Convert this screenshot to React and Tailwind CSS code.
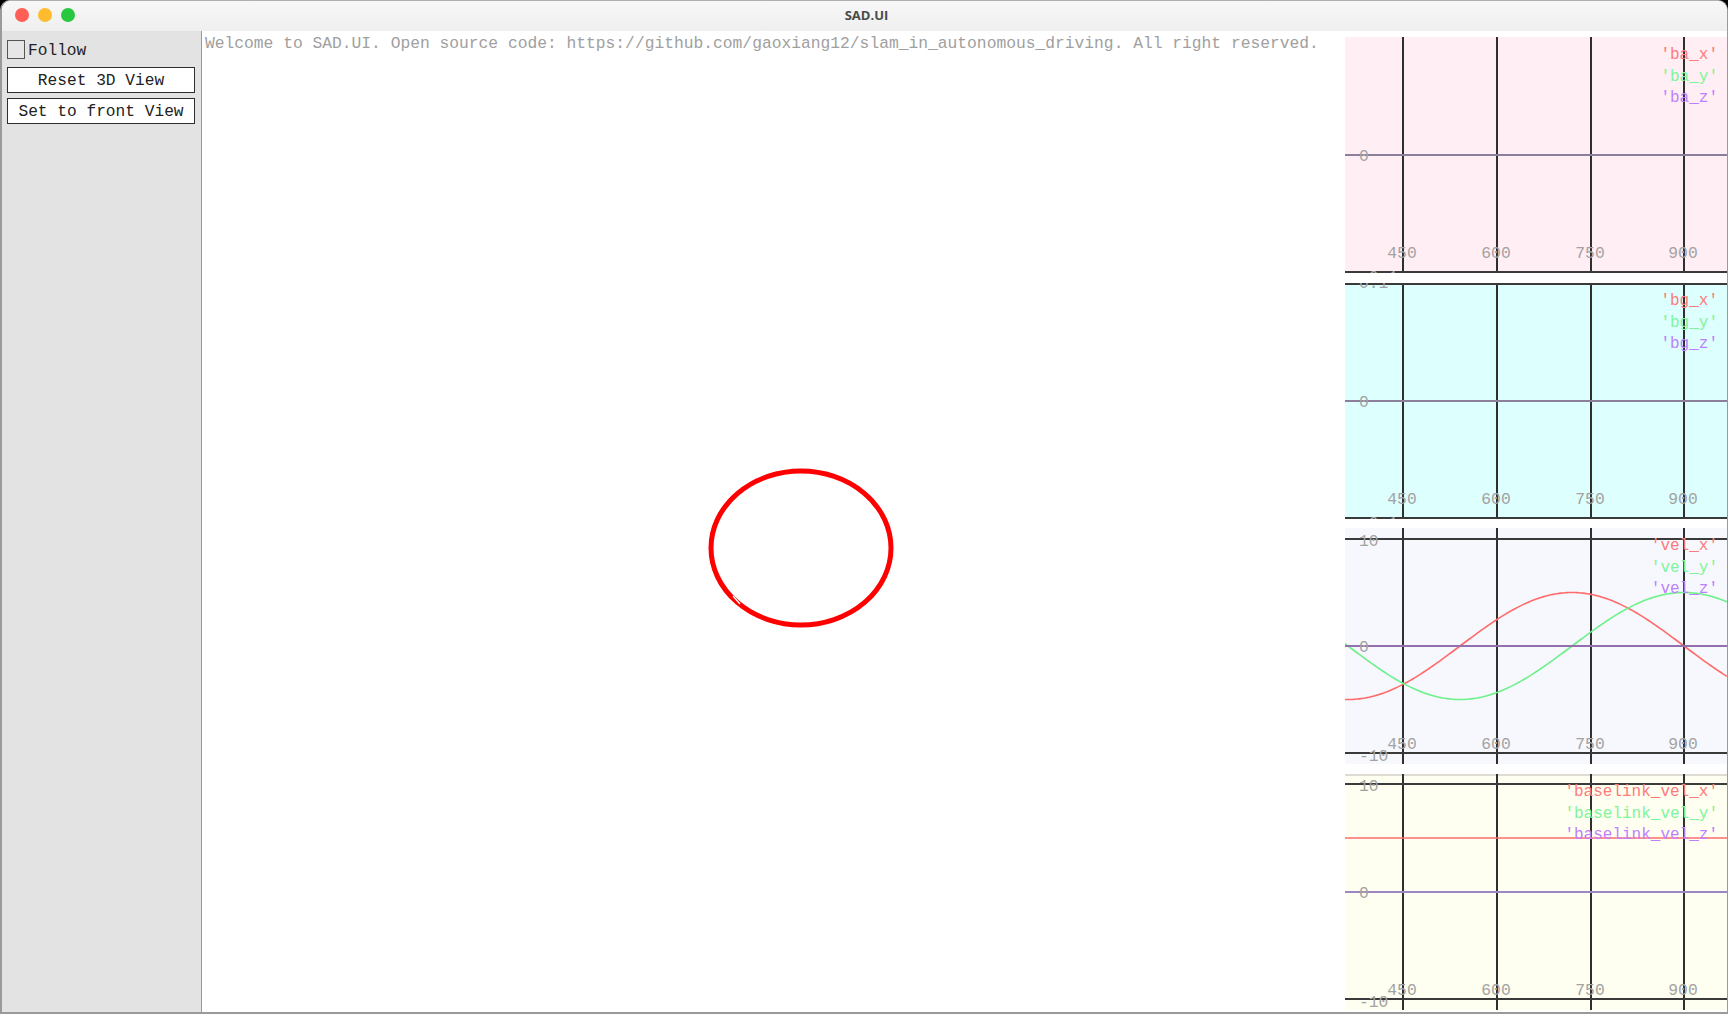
import React from 'react';

const mono = { fontFamily: '"Liberation Mono", "DejaVu Sans Mono", monospace' };

const GRID_X = [58, 152, 246, 339];
const X_TICKS = ['450', '600', '750', '900'];
const PLOT_W = 382;
const PLOT_H = 236;

function wave(fn) {
  const pts = [];
  for (let px = 0; px <= PLOT_W; px += 2) {
    const t = (2 * Math.PI * (px + 1345 - 1348)) / 448;
    const v = fn(t);
    pts.push(`${px},${(118 - v * 10.7).toFixed(2)}`);
  }
  return 'M' + pts.join(' L');
}

const plots = [
  {
    bg: '#ffeef3',
    lines: [235],
    zero: '#8b7f9c',
    ylabels: [
      { y: 118, t: '0' },
      { y: 239, t: '-0.1' },
    ],
    legend: ["'ba_x'", "'ba_y'", "'ba_z'"],
  },
  {
    bg: '#ddfffe',
    lines: [1, 235],
    zero: '#8b7f9c',
    ylabels: [
      { y: -1, t: '0.1' },
      { y: 118, t: '0' },
      { y: 239, t: '-0.1' },
    ],
    legend: ["'bg_x'", "'bg_y'", "'bg_z'"],
  },
  {
    bg: '#f7f8fe',
    lines: [11, 225],
    zero: '#9470ae',
    ylabels: [
      { y: 12, t: '10' },
      { y: 118, t: '0' },
      { y: 227, t: '-10' },
    ],
    legend: ["'vel_x'", "'vel_y'", "'vel_z'"],
    curves: [
      { d: wave((t) => -5 * Math.cos(t)), c: '#ff6b6b' },
      { d: wave((t) => -5 * Math.sin(t)), c: '#6ef08c' },
    ],
  },
  {
    bg: '#fefff0',
    lines: [10, 225],
    zero: '#9c86c4',
    top: true,
    ylabels: [
      { y: 11, t: '10' },
      { y: 118, t: '0' },
      { y: 227, t: '-10' },
    ],
    legend: ["'baselink_vel_x'", "'baselink_vel_y'", "'baselink_vel_z'"],
    curves: [{ d: `M0,64 L${PLOT_W},64`, c: '#ff6b6b' }],
  },
];

const legendColors = ['#ff7a7a', '#7ef59a', '#bf80ff'];

function Plot({ p }) {
  return (
    <svg width={PLOT_W} height={PLOT_H} className="block shrink-0" style={{ background: p.bg }}>
      {p.top && <rect x="0" y="0" width={PLOT_W} height="2" fill="#dedcd2" />}
      {GRID_X.map((x) => (
        <line key={x} x1={x} y1="0" x2={x} y2={PLOT_H} stroke="#2f2f2f" strokeWidth="2" />
      ))}
      {p.lines.map((y) => (
        <line key={y} x1="0" y1={y} x2={PLOT_W} y2={y} stroke="#3a3a3a" strokeWidth="2" />
      ))}
      {(p.curves || []).map((c, i) => (
        <path key={i} d={c.d} fill="none" stroke={c.c} strokeWidth="1.6" />
      ))}
      <line x1="0" y1="118" x2={PLOT_W} y2="118" stroke={p.zero} strokeWidth="2" />
      {p.ylabels.map((l) => (
        <text key={l.t + l.y} x="14" y={l.y + 1} dominantBaseline="central" fontSize="16.3" fill="#a3a3a3" style={mono}>
          {l.t}
        </text>
      ))}
      {GRID_X.map((x, i) => (
        <text key={x} x={x - 1} y="216" textAnchor="middle" dominantBaseline="central" fontSize="16.3" fill="#a3a3a3" style={mono}>
          {X_TICKS[i]}
        </text>
      ))}
      {p.legend.map((l, i) => (
        <text key={l} x="373" y={18 + i * 21.5} textAnchor="end" dominantBaseline="central" fontSize="16" fill={legendColors[i]} style={mono}>
          {l}
        </text>
      ))}
    </svg>
  );
}

export default function App() {
  return (
    <div className="w-[1728px] h-[1014px] bg-black overflow-hidden">
      <div className="h-full flex flex-col rounded-t-[10px] overflow-hidden bg-white border-t border-t-[#b0b0b0] border-l-2 border-r border-b-2 border-[#9a9a9a]">
        {/* title bar */}
        <div className="h-[30px] shrink-0 relative flex items-center justify-center bg-gradient-to-b from-[#f7f7f7] to-[#efefef]">
          <div className="absolute left-[13px] top-[7px] flex gap-[9px]">
            <span className="w-[14px] h-[14px] rounded-full bg-[#ff5f57]" />
            <span className="w-[14px] h-[14px] rounded-full bg-[#febc2e]" />
            <span className="w-[14px] h-[14px] rounded-full bg-[#28c840]" />
          </div>
          <span className="text-[13px] font-bold text-[#4a4a4a] pl-[4px]" style={{ fontFamily: '"Open Sans", "Liberation Sans", sans-serif' }}>
            SAD.UI
          </span>
        </div>

        <div className="flex flex-1 min-h-0">
          {/* side panel */}
          <div className="w-[200px] shrink-0 bg-[#e3e3e3] border-r border-[#999] px-[5px] pt-[9px] flex flex-col text-[16.2px] text-[#222]" style={mono}>
            <label className="flex items-center h-[19px]">
              <span className="w-[18px] h-[19px] border border-[#555] bg-[#e6e6e6]" />
              <span className="ml-[3px] pt-[3px]">Follow</span>
            </label>
            <button className="mt-[8px] w-[188px] h-[26px] bg-white border border-[#2e2e2e] flex items-center justify-center leading-none pt-[3px]">
              Reset 3D View
            </button>
            <button className="mt-[5px] w-[188px] h-[26px] bg-white border border-[#2e2e2e] flex items-center justify-center leading-none pt-[3px]">
              Set to front View
            </button>
          </div>

          {/* main */}
          <div className="flex-1 flex min-w-0 bg-white">
            <div className="flex-1 relative">
              <div className="pl-[3px] pt-[4px] text-[16.3px] leading-[18px] text-[#a0a0a0] whitespace-nowrap" style={mono}>
                Welcome to SAD.UI. Open source code: https://github.com/gaoxiang12/slam_in_autonomous_driving. All right reserved.
              </div>
              <svg className="absolute left-0 top-0" width="1143" height="981">
                <ellipse cx="599" cy="517" rx="90" ry="77" fill="none" stroke="#ff0000" strokeWidth="5" />
                <line x1="531" y1="565" x2="538" y2="573" stroke="#ffffff" strokeWidth="1.4" />
              </svg>
            </div>
            <div className="w-[382px] shrink-0 pt-[6px] flex flex-col gap-[9.5px]">
              {plots.map((p, i) => (
                <Plot key={i} p={p} />
              ))}
            </div>
          </div>
        </div>
      </div>
    </div>
  );
}
